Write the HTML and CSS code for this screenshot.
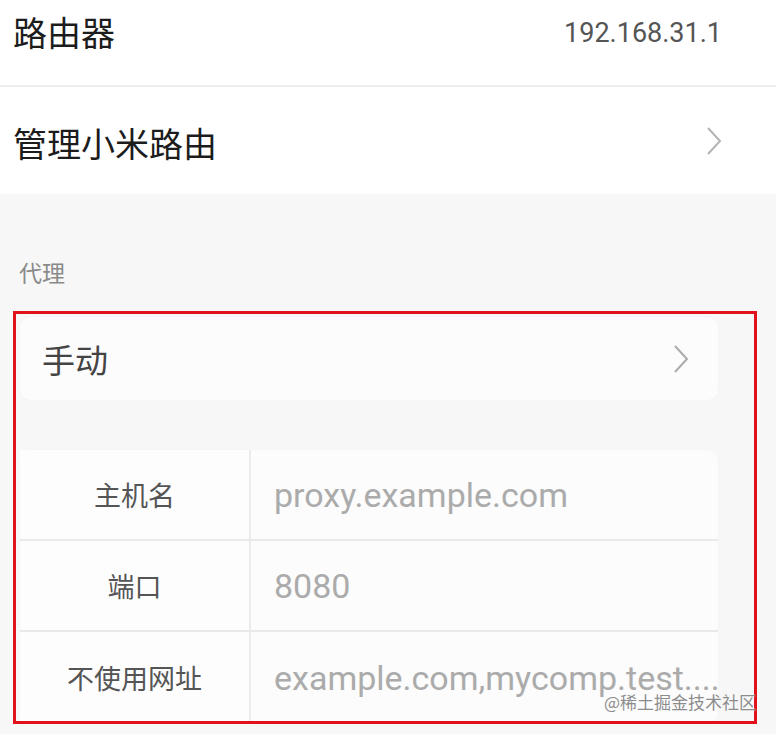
FILE: index.html
```html
<!DOCTYPE html>
<html lang="zh">
<head>
<meta charset="utf-8">
<title>代理设置</title>
<link rel="stylesheet" href="styles.css">
</head>
<body>
<div class="page">
  <section class="top">
    <div class="row row-router">
      <span class="title">路由器</span>
      <span class="ip">192.168.31.1</span>
    </div>
    <div class="divider"></div>
    <div class="row row-manage">
      <span class="title">管理小米路由</span>
      <svg class="chev" width="16" height="30" viewBox="0 0 16 30"><polyline points="2,2 14,15 2,28" fill="none" stroke="#b4b4b4" stroke-width="2"/></svg>
    </div>
  </section>

  <div class="section-title">代理</div>

  <div class="highlight">
    <div class="card mode">
      <span class="mode-text">手动</span>
      <svg class="chev" width="18" height="30" viewBox="0 0 18 30"><polyline points="3,2 15,15 3,28" fill="none" stroke="#ababab" stroke-width="2"/></svg>
    </div>
    <div class="card table">
      <div class="trow">
        <div class="label">主机名</div>
        <div class="value">proxy.example.com</div>
      </div>
      <div class="trow">
        <div class="label">端口</div>
        <div class="value">8080</div>
      </div>
      <div class="trow">
        <div class="label">不使用网址</div>
        <div class="value">example.com,mycomp.test....</div>
      </div>
    </div>
  </div>

  <div class="watermark">@稀土掘金技术社区</div>
</div>
</body>
</html>
```

FILE: styles.css
```css
* { box-sizing: border-box; }
html, body {
  margin: 0;
  padding: 0;
  background: #f7f7f7;
}
body {
  font-family: "Noto Sans CJK SC", Roboto, sans-serif;
  width: 776px;
  height: 734px;
  overflow: hidden;
}
.page {
  position: relative;
  height: 734px;
}
.top {
  background: #ffffff;
}
.row {
  display: flex;
  justify-content: space-between;
}
.title {
  font-size: 34px;
  color: #1c1c1c;
  line-height: 44px;
}
.row-router {
  height: 85px;
  padding: 10px 54px 0 13px;
  align-items: flex-start;
}
.ip {
  font-family: Roboto, "Noto Sans CJK SC", sans-serif;
  font-size: 27px;
  color: #555555;
  line-height: 44px;
  margin-top: 1px;
}
.divider {
  height: 2px;
  background: #ededed;
}
.row-manage {
  height: 107px;
  padding: 5px 54px 0 13px;
  align-items: center;
}
.row-manage .chev {
  margin-top: -4px;
}
.section-title {
  padding: 62px 19px 0;
  font-size: 23px;
  line-height: 32px;
  color: #8a8a8a;
  margin-bottom: 23px;
}
.highlight {
  margin: 0 19px 0 13px;
  height: 413px;
  border: 3px solid #e1121c;
  padding: 3px 36px 0 4px;
  overflow: hidden;
}
.card {
  background: #fcfcfc;
  border-radius: 10px;
  box-shadow: 0 0 2px rgba(0,0,0,0.04);
}
.mode {
  height: 83px;
  display: flex;
  align-items: center;
  justify-content: space-between;
  padding: 0 28px 0 22px;
}
.mode-text {
  font-size: 33px;
  color: #444444;
  line-height: 40px;
}
.table {
  margin-top: 50px;
}
.trow {
  display: grid;
  grid-template-columns: 231px 1fr;
  height: 91px;
  border-bottom: 2px solid #e9e9e9;
}
.trow:last-child {
  border-bottom: none;
}
.label {
  display: flex;
  align-items: center;
  justify-content: center;
  font-size: 27px;
  color: #555555;
  border-right: 2px solid #ececec;
  background: #fdfdfd;
}
.value {
  display: flex;
  align-items: center;
  padding-left: 23px;
  font-family: Roboto, "Noto Sans CJK SC", sans-serif;
  font-size: 34px;
  color: #ababab;
  white-space: nowrap;
  overflow: hidden;
}
.watermark {
  position: absolute;
  right: 20px;
  top: 690px;
  font-size: 17px;
  line-height: 24px;
  color: #8c8c8c;
  text-shadow: 0 0 2px #ffffff;
}
```
